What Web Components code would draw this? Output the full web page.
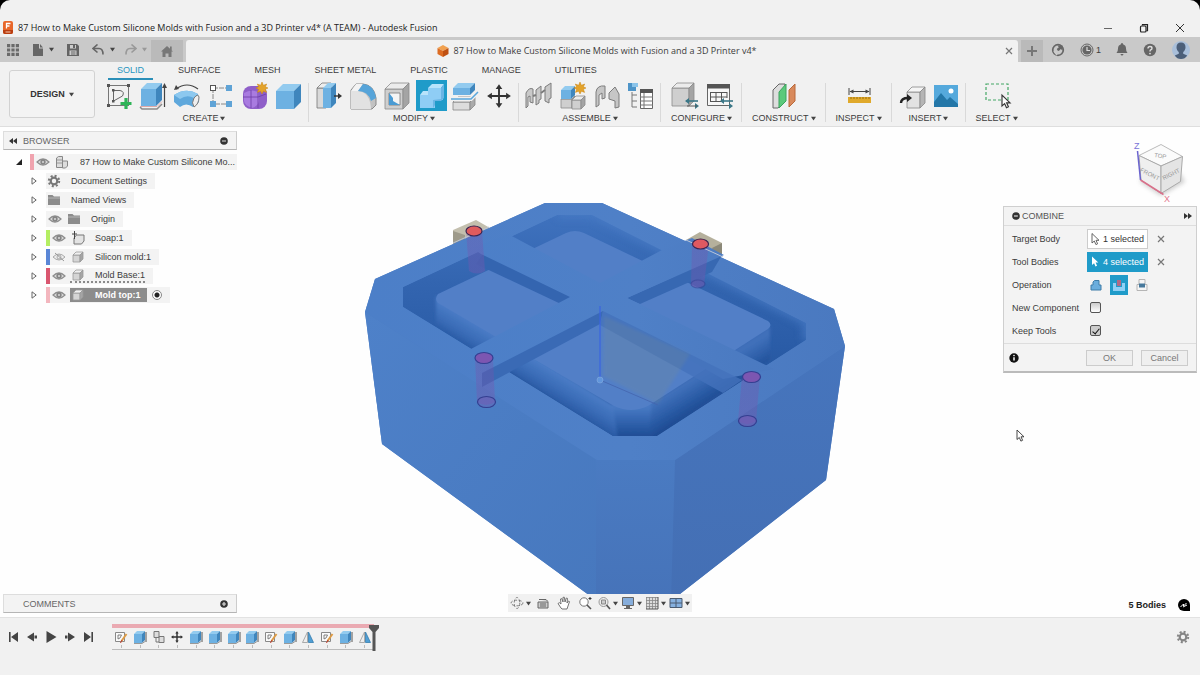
<!DOCTYPE html>
<html lang="en">
<head>
<meta charset="utf-8">
<title>Autodesk Fusion</title>
<style>
html{background:#000}
body{margin:0;font:9px/12px "Liberation Sans",Arial,sans-serif;color:#3c3c3c}
</style>
</head>
<body>
<fusion-app></fusion-app>
<script>
const define = (name, css, html) => customElements.define(name, class extends HTMLElement {
  constructor() {
    super();
    const t = document.createElement('template');
    t.innerHTML = `<style>*{box-sizing:border-box}button{font:inherit;color:inherit;background:none;border:0;padding:0;margin:0}a{color:inherit;text-decoration:none}${css}</style>` + (typeof html === 'function' ? html(this) : html);
    this.attachShadow({mode: 'open'}).append(t.content.cloneNode(true));
  }
});

/* ---------- icon drawings ---------- */
const box = (x, y, w, h, d, f, t, s, stroke = 'none') =>
  `<g stroke="${stroke}" stroke-width=".8" stroke-linejoin="round"><path fill="${f}" d="M${x} ${y + d}h${w}v${h}h-${w}z"/><path fill="${t}" d="M${x} ${y + d}l${d}-${d}h${w}l-${d} ${d}z"/><path fill="${s}" d="M${x + w} ${y + d}l${d}-${d}v${h}l-${d} ${d}z"/></g>`;
const blueBox = (x, y, w, h, d) => box(x, y, w, h, d, '#6db1e2', '#93cbef', '#3f86bd');
const greyBox = (x, y, w, h, d) => box(x, y, w, h, d, '#cfcfcf', '#ececec', '#a4a4a4', '#8a8a8a');
const spark = (x, y) => `<path fill="#e3a32b" stroke="#c98512" stroke-width=".5" transform="translate(${x} ${y})" d="M0-6l1.400 3.300L4.700-4 3.400-1.200 6 0 3.400 1.300 4.600 4.400 1.400 3.200 0 6-1.400 3.200-4.600 4.400-3.400 1.300-6 0-3.400-1.200-4.700-4-1.400-2.700z"/>`;
const gear = (c) => `<g fill="none" stroke="${c}"><circle cx="7" cy="7" r="3.300" stroke-width="2.200"/><circle cx="7" cy="7" r="5.200" stroke-width="2" stroke-dasharray="2.040 2.040"/></g>`;
const arrow = 'M0 0v9.500l2.300-2 1.600 3.600 1.700-.8-1.600-3.500h3z';
const move = (c, s, w) => `<g transform="translate(${c} ${c}) scale(${s})" fill="#333" stroke="#333"><path stroke-width="${w}" d="M-9 0h18M0-9v18"/><path stroke="none" d="M-12.500 0l5-3.500v7zM12.500 0l-5-3.500v7zM0-12.500l3.500 5h-7zM0 12.500l3.500-5h-7z"/></g>`;

const ICONS = {
  logo: [12, 14, '<rect x="1" y="0" width="10" height="13" rx="2" fill="#e8662a"/><path fill="#b93d10" d="M1 9h10v2q0 2-2 2H3q-2 0-2-2z"/><path d="M4.500 7.500v-5h4M4.500 5h3" fill="none" stroke="#fff" stroke-width="1.300"/><path d="M3.500 11h5" stroke="#f7c9b0"/>'],
  min: [10, 10, '<path d="M1 5.500h8" stroke="#666" stroke-width="1"/>'],
  restore: [10, 10, '<rect x="1.500" y="3" width="5.500" height="6" rx="1" fill="none" stroke="#222" stroke-width="1.200"/><path d="M3.500 2.500V1.600h5v6h-1" fill="none" stroke="#222" stroke-width="1.200"/>'],
  close: [10, 10, '<path d="M1 1l8 8M9 1l-8 8" stroke="#333" stroke-width="1"/>'],
  x: [10, 10, '<path d="M2 2l6 6M8 2l-6 6" stroke="#777" stroke-width="1.200"/>'],
  caret: [5, 5, '<path d="M0 .8h5L2.500 4.500z" fill="#444"/>'],
  caretoff: [5, 5, '<path d="M0 .8h5L2.500 4.500z" fill="#999"/>'],
  apps: [12, 12, '<path fill="#6a6a6a" d="M0 0h3.200v3.200H0zM4.400 0h3.200v3.200H4.400zM8.800 0H12v3.200H8.800zM0 4.400h3.200v3.200H0zM4.400 4.400h3.200v3.200H4.400zM8.800 4.400H12v3.200H8.800zM0 8.800h3.200V12H0zM4.400 8.800h3.200V12H4.400zM8.800 8.800H12V12H8.800z"/>'],
  file: [12, 14, '<path fill="#666" d="M1 1h6v4.500h4V13H1z"/><path fill="#666" d="M8 1l3 3.500H8z"/>'],
  save: [12, 12, '<path fill="#646464" d="M0 0h10l2 2v10H0z"/><path fill="#ccc" d="M3 1h6v3.500H3zM2.500 6.500h7V11h-7z"/><path fill="#646464" d="M6 1h2v3H6zM4 7.500h4.500v1H4zM4 9.500h4.500v1H4z"/>'],
  undo: [13, 12, '<path d="M2 4.500h5q4 0 4 6" fill="none" stroke="#666" stroke-width="1.600"/><path d="M5.500.5L1 4.500l4.500 4" fill="none" stroke="#666" stroke-width="1.600"/>'],
  redo: [13, 12, '<path d="M11 4.500H6q-4 0-4 6M7.500.5l4.500 4-4.500 4" fill="none" stroke="#999" stroke-width="1.600"/>'],
  home: [14, 13, '<path fill="#777" d="M7 1l6 5.500h-1.500V12H8.500V8.500h-3V12H2.500V6.500H1z"/><path fill="#777" d="M10 1.500h1.700V5H10z"/>'],
  doc: [12, 12, '<path fill="#f1a14f" d="M6 0l5.500 3L6 6 .5 3z"/><path fill="#dd6c22" d="M.5 3L6 6v6L.5 9z"/><path fill="#bf5012" d="M11.500 3L6 6v6l5.500-3z"/>'],
  plus: [12, 12, '<path d="M6 1v10M1 6h10" stroke="#777" stroke-width="2"/>'],
  ext: [14, 14, '<circle cx="7" cy="7" r="5.300" fill="none" stroke="#666" stroke-width="1.700"/><path fill="#666" d="M6.500 2.500h5v5l-1.700-1.400-2 2q-1.500-.2-2-2l2-1.800z"/><path d="M3 8l3 4" stroke="#ccc" stroke-width="1.500"/>'],
  clock: [14, 14, '<circle cx="7" cy="7" r="6" fill="none" stroke="#666" stroke-width="1"/><circle cx="7" cy="7" r="4.600" fill="#666"/><path d="M7 4v3.500h3" fill="none" stroke="#ddd" stroke-width="1.200"/>'],
  bell: [12, 13, '<path fill="#666" d="M6 0q1 0 1 1.200 3 1 3 4.300 0 3 1.500 4.500H.5Q2 8.500 2 5.500q0-3.300 3-4.300Q5 0 6 0zM4.500 11h3q-.3 1.500-1.500 1.500T4.500 11z"/>'],
  help: [14, 14, '<circle cx="7" cy="7" r="6.200" fill="#666"/><path d="M5 5.500q0-2 2-2t2 1.700q0 1.200-1.300 1.700Q7 7.300 7 8.500" fill="none" stroke="#ddd" stroke-width="1.400"/><circle cx="7" cy="10.600" r=".9" fill="#ddd"/>'],
  avatar: [18, 18, '<circle cx="9" cy="9" r="9" fill="#a9bfda"/><path fill="#4c5f79" d="M9 1.500c3 0 4.500 2 4.500 4.700 0 2-1 4-2.300 4.900v1.700l4 1.700Q13 18 9 18t-6.200-3.500l4-1.700v-1.700C5.500 10.200 4.500 8.200 4.500 6.200 4.500 3.500 6 1.500 9 1.500z"/>'],

  sketch: [30, 30, '<rect x="4.500" y="4.500" width="20" height="20" fill="none" stroke="#777"/><path d="M3 3h3v3H3zM23 3h3v3h-3zM3 23h3v3H3z" fill="#555"/><path d="M9.500 20V9.500H16q5 1 2.500 5.500l-9 5" fill="none" stroke="#666"/><path d="M8 8h2.500v2.500H8zM8 19h2.500v2.500H8z" fill="#555"/><path d="M22 17v11M16.500 22.500h11" stroke="#2eb457" stroke-width="3.200"/>'],
  extrude: [30, 30, '<path d="M2 26l2 2h15l5-5" fill="none" stroke="#8a8a8a" stroke-width="1.500"/><path d="M2 25.500h17l5-5" fill="none" stroke="#dca9a9"/>' + blueBox(3, 2, 15, 17, 6) + '<path d="M26.500 26V6" stroke="#444" stroke-width="1.200"/><path d="M26.500 2l2.500 5h-5z" fill="#444"/>'],
  revolve: [30, 30, '<path fill="#5fa8dc" d="M2 14q12-8 24-1l1 8-6 5q-7-5-13 0l-6-5z"/><path fill="#8cc8ef" d="M2 14q12-8 24-1l-4 4q-7-4-14 1z"/><path d="M22 17q4-5 5-1 0 7-5 10-3-4 0-9z" fill="#eee" stroke="#777"/><path d="M4 8q11-8 22 0" fill="none" stroke="#444" stroke-width="1.200"/><path d="M2 9l2-5 3 4z" fill="#444"/>'],
  pattern: [30, 30, '<path d="M7 7h16M7 7v16h16" fill="none" stroke="#888" stroke-dasharray="5 1"/><rect x="4.500" y="4.500" width="5" height="5" fill="#fff" stroke="#555"/><path fill="#5fa3d6" d="M20 4h6v6h-6zM20 20h6v6h-6zM4 20h6v6H4z"/>'],
  form: [30, 30, '<rect x="3" y="5" width="24" height="23" rx="8" fill="#8f5fc9"/><path d="M4 12q8-5 15 0v8q-1 5-7 7-7-2-8-7z" fill="#a97be0"/><path d="M3 16h15l8-3M11 9v18M18 11v16" stroke="#6c3ea6" fill="none" stroke-width=".8"/>' + spark(22, 7)],
  prim: [30, 30, blueBox(2, 3, 18, 18, 7)],
  press: [30, 30, box(3, 2, 9, 20, 5, '#d9d9d9', '#eee', '#bbb', '#777') + blueBox(9, 2, 8, 20, 5) + '<path d="M20 15h5" stroke="#333" stroke-width="1.400"/><path d="M28 15l-4-3v6z" fill="#333"/>'],
  fillet: [30, 30, '<path d="M3 9l5-6h7q11 1 13 14v7l-4 4H3z" fill="#c2c2c2" stroke="#888"/><path d="M3 10h7q12 1 13 18H3z" fill="#e2e2e2"/><path d="M3 10l5-7h7l-5 7z" fill="#f3f3f3"/><path d="M15 3q11 1 13 14l-5 3Q20 10 10 10z" fill="#56a4d9"/>'],
  shell: [30, 30, greyBox(3, 2, 18, 20, 6) + '<path d="M7 12h11v12H7z" fill="#f4f4f4" stroke="#777" stroke-width=".8"/><path d="M7 24V12l4 5v3l7 4z" fill="#4a9bd3"/>'],
  combine: [31, 31, '<path fill="#8fcdf5" d="M4 28V15h8V8h15v12h-8v8z"/><path fill="#b9e3fb" d="M4 15l3-4h5v4zM12 8l4-4h12l-3 4z"/><path fill="#6ab5e5" d="M25 8l3-4v14l-3 3h-6v4l-2 3V20l8-1z"/>'],
  split: [30, 30, box(3, 16, 17, 8, 5, '#ddd', '#f2f2f2', '#aaa', '#888') + blueBox(3, 2, 17, 7, 5) + '<path d="M1 18h20l7-7" fill="none" stroke="#f1f1f1" stroke-width="4"/><path d="M1 18h20l7-7" fill="none" stroke="#5aa7dc" stroke-width="1.500"/>'],
  move: [30, 30, move(15, .95, 2)],
  joint1: [30, 30, '<g fill="#c9c9c9" stroke="#7c7c7c"><path d="M2 27V12q3-6 7-4v14l-3-1v-6l-2 1v9z"/><path d="M12 24V9l5-4v13l-2 1v3zM21 20V6l6-4v15l-2 1v4z"/><path d="M9 15l3-1M17 12l4-3" stroke-width="2"/></g>'],
  newcomp: [30, 30, greyBox(3, 15, 11, 9, 3) + greyBox(14, 15, 9, 9, 4) + blueBox(3, 5, 10, 9, 4) + spark(22, 7)],
  joint2: [30, 30, '<g fill="#c6c6c6" stroke="#7c7c7c"><path d="M4 26V11q1-7 9-6v12l-3 1v-6l-3 2v10z"/><path d="M17 12l6-6 4 7v13l-4 1v-7l-6-2z"/></g>'],
  bom: [30, 30, '<path fill="#4d94c8" d="M2 2h8v8H2z"/><path fill="#8bc4ea" d="M6 2h6v4H6z"/><path d="M6 11v15M6 14h5M6 20h5M6 26h5" stroke="#777" fill="none"/><path fill="#fff" stroke="#666" d="M14.500 8.500h12v19h-12z"/><path fill="#555" d="M14 8h13v4H14z"/><path d="M14 16h13M14 20h13M14 24h13M18 12v15" stroke="#777"/>'],
  conf1: [30, 30, greyBox(2, 2, 17, 18, 5) + '<path d="M16 20h12" stroke="#3b7787" stroke-width="1.600"/><path d="M19 17v6l-4-3zM25 22v6l4-3z" fill="#3b7787"/><path d="M17 25h10" stroke="#555"/>'],
  conf2: [30, 30, '<path fill="#f7f7f7" stroke="#666" d="M3.500 3.500h22v21h-22z"/><path fill="#555" d="M3 3h23v4.500H3z"/><path d="M6 11.500h17M6 16h17M6 20.500h12M6.500 11v10M12 11v10M17.500 11v10M23 11v6" stroke="#555" fill="none"/><path d="M18 20h11" stroke="#3b7787" stroke-width="1.600"/><path d="M20 17v6l-4-3zM25 22v6l4-3z" fill="#3b7787"/>'],
  plane: [30, 30, '<path fill="#ddd" stroke="#666" d="M4 27V9l6-6h6v18l-7 6z"/><path fill="#5cc97b" stroke="#3ba35c" d="M10 27V11l7-8v17z"/><path fill="#d98a5c" stroke="#b9693b" d="M20 26V9l6-6v17z"/>'],
  measure: [30, 30, '<path d="M5 7v7M26 7v7M6 10.500h19" stroke="#444"/><path d="M5.500 10.500l4-2v4zM25.500 10.500l-4-2v4z" fill="#444"/><path fill="#e0a92b" d="M4 16h23v6H4z"/><path d="M7 16v2M10 16v2M13 16v2M16 16v2M19 16v2M22 16v2M25 16v2" stroke="#9a6f0d"/>'],
  insert: [30, 30, box(10, 6, 13, 16, 5, '#e2e2e2', '#f5f5f5', '#b5b5b5', '#888') + '<path d="M4 22q0-5 7-5" fill="none" stroke="#222" stroke-width="2.400"/><path d="M10 13l5 4-5 4z" fill="#222"/>'],
  image: [30, 30, '<path fill="#55a9dc" d="M3 4h24v22H3z"/><path fill="#2477a8" d="M3 21l7-9 6 7 3-3 8 7v3H3z"/><circle cx="20" cy="10" r="2.500" fill="#fff"/>'],
  select: [30, 30, '<path d="M4 3h22v16H4z" fill="none" stroke="#45a766" stroke-width="1.200" stroke-dasharray="3 2"/><path transform="translate(20 14) scale(1.150)" d="' + arrow + '" fill="#fff" stroke="#333"/>'],

  rew: [10, 8, '<path fill="#333" d="M5 1v6L1 4zM9 1v6L5 4z"/>'],
  fwd: [10, 8, '<path fill="#333" d="M1 1v6l4-3zM5 1v6l4-3z"/>'],
  minus: [8, 8, '<circle cx="4" cy="4" r="3.800" fill="#333"/><path d="M2 4h4" stroke="#ddd" stroke-width="1.200"/>'],
  add: [8, 8, '<circle cx="4" cy="4" r="3.800" fill="#333"/><path d="M2 4h4M4 2v4" stroke="#ddd" stroke-width="1.200"/>'],
  info: [10, 10, '<circle cx="5" cy="5" r="4.700" fill="#111"/><path d="M5 4.200v3.300" stroke="#fff" stroke-width="1.500"/><circle cx="5" cy="2.600" r=".8" fill="#fff"/>'],
  open: [8, 8, '<path fill="#222" d="M7 1v6H1z"/>'],
  shut: [8, 8, '<path fill="#fff" stroke="#666" d="M2 .8L6.200 4 2 7.200z"/>'],
  eye: [14, 12, '<path d="M1 6q6-6 12 0-6 6-12 0z" fill="#dcdcdc" stroke="#8e8e8e" stroke-width="1.200"/><circle cx="7" cy="6" r="2.700" fill="#858585"/><circle cx="7" cy="6" r="1" fill="#d8d8d8"/>'],
  eyeoff: [14, 12, '<path d="M1 6q6-6 12 0-6 6-12 0z" fill="#eee" stroke="#a8a8a8"/><circle cx="7" cy="6" r="2" fill="none" stroke="#a8a8a8"/><path d="M3 2l9 8" stroke="#999"/>'],
  gear: [14, 14, gear('#777')],
  gear2: [14, 14, gear('#858585')],
  folder: [14, 12, '<path fill="#8c8c8c" d="M1 1h4.500L7 2.500h6V11H1z"/><path d="M1 4h12" stroke="#b5b5b5"/>'],
  assembly: [14, 14, '<path fill="#ddd" stroke="#888" d="M1.500 3l2-1.500h4v11h-6zM7.500 6h5v5l-2 2h-3z"/><path d="M2 5h5M2 8h5" stroke="#999"/>'],
  soap: [14, 14, '<path fill="#e3e3e3" stroke="#777" d="M3 7l2.500-3H13v6l-2.500 3H3z"/><path d="M3.500 0v8M1 3h5" stroke="#444"/>'],
  body: [12, 12, box(1, 1, 7, 7, 3, '#d5d5d5', '#f0f0f0', '#a5a5a5', '#999')],
  cursor: [9, 12, '<path transform="translate(1 .5)" d="' + arrow + '" fill="#fff" stroke="#555" stroke-width=".9"/>'],
  cursorw: [9, 12, '<path transform="translate(1 .5) scale(.9)" d="' + arrow + '" fill="#fff"/>'],
  pointer: [9, 13, '<path transform="translate(1 1)" d="' + arrow + '" fill="#fff" stroke="#333" stroke-width=".9"/>'],
  opjoin: [12, 12, '<path fill="#6aaddd" stroke="#3e7ca8" d="M1 11V6h2V3l1.500-1.500H9V6h2v5z"/>'],
  opcut: [12, 12, '<path fill="#8fd0f5" d="M0 4h3v4h6V4h3v8H0z"/><path fill="#b06a86" d="M4 1h4v6H4z"/>'],
  opint: [12, 12, '<path fill="#f5f5f5" stroke="#b5b5b5" d="M3 .5h6v5h2v6H1v-6h2z"/><path fill="#47799c" d="M3 4.500h6v4H3z"/>'],

  orbit: [14, 14, '<g fill="none" stroke="#777" stroke-width=".9"><ellipse cx="7" cy="7" rx="6" ry="2.800" stroke-dasharray="3 1.500"/><ellipse cx="7" cy="7" rx="2.800" ry="5.500" stroke-dasharray="3 1.500"/></g>'],
  look: [14, 14, '<path fill="#ccc" stroke="#666" d="M2 6h10v6H2zM3 3.500h7l2 2"/><path d="M4 8h6M4 10h6" stroke="#666"/>'],
  pan: [14, 14, '<path fill="#fff" stroke="#666" stroke-width=".9" stroke-linejoin="round" d="M4 12L1 7.500l1.500-.8L4 8 3.500 3l1.300-.4L6 6V1.300h1.400L8 6l1.300-4 1.200.4L10 7l1.500-2 1 .6L11 10l-1 3H5z"/>'],
  zoom: [14, 14, '<circle cx="6" cy="6" r="4.200" fill="#fff" stroke="#777"/><path d="M9 9l4 4" stroke="#555" stroke-width="1.600"/><path d="M12 1v3M10.500 2.500h3" stroke="#333"/>'],
  fit: [14, 14, '<circle cx="6.500" cy="6" r="4.500" fill="#eee" stroke="#999"/><path d="M4.500 4h4v4h-4z" fill="#ccc" stroke="#888"/><path d="M9.500 9l3.500 4" stroke="#555" stroke-width="1.600"/>'],
  display: [14, 14, '<path fill="#86addb" stroke="#666" d="M1.500 1.500h11v8h-11z"/><path fill="#666" d="M5 10h4v2h2v1H3v-1h2z"/>'],
  grid: [14, 14, '<path fill="#ddd" d="M1 1h12v12H1z"/><path d="M1 1.500h12M1 4.500h12M1 7.500h12M1 10.500h12M1.500 1v12M4.500 1v12M7.500 1v12M10.500 1v12" stroke="#888" stroke-width=".8"/><path d="M1 13h12V1" stroke="#555" fill="none"/>'],
  views: [14, 12, '<path fill="#86b1e0" stroke="#4a5b70" d="M1 1.500h12v9H1zM7 1.500v9M1 6h12"/>'],

  first: [12, 12, '<path fill="#444" d="M2 1h1.600v10H2zM11 1v10L4 6z"/>'],
  prev: [12, 12, '<path fill="#444" d="M8 1.500v9L1 6zM8.500 4.500h2.500v3H8.500z"/>'],
  play: [12, 14, '<path fill="#444" d="M1.500 1l10 6-10 6z"/>'],
  next: [12, 12, '<path fill="#444" d="M4 1.500v9L11 6zM1 4.500h2.500v3H1z"/>'],
  last: [12, 12, '<path fill="#444" d="M8.400 1H10v10H8.400zM1 1v10l7-5z"/>'],
  tsketch: [14, 14, '<path d="M1.500 2.500h9v9h-9z" fill="#fafafa" stroke="#888"/><path d="M4 9V5h3.500L6 8z" fill="none" stroke="#666" stroke-width=".8"/><path d="M12.500 4l-5 7" stroke="#dd9b45" stroke-width="2"/><path d="M8 10l-1.500 3" stroke="#c0392b"/>'],
  textrude: [14, 14, blueBox(1, 1, 8, 9, 3) + '<path d="M13 12V2" stroke="#555"/><path d="M1 13.500h8l3-2" stroke="#999" fill="none"/>'],
  tjoint: [14, 14, '<path fill="#ddd" stroke="#777" d="M2 1.500h5v6H2zM7 6.500h5v6H7z"/><path d="M4 8v4h3" fill="none" stroke="#777"/>'],
  tmove: [14, 14, move(7, .48, 3)],
  tmirror: [14, 14, '<path fill="#eee" stroke="#999" stroke-width=".8" d="M6.500 2v10.500h-5z"/><path fill="#4f9ed4" stroke="#377daf" stroke-width=".8" d="M7.500 2l5 10.500h-5z"/>'],
  marker: [10, 26, '<path fill="#555" d="M0 0h10v3L6.500 7v19h-3V7L0 3z"/>'],
  chat: [12, 12, '<path fill="#000" d="M6 0a6 6 0 0 1 6 6v6H6A6 6 0 0 1 6 0z"/><path d="M2.500 8l3-3v2l3-3M5 8l4-2" stroke="#fff" fill="none"/>']
};
define('ui-icon', ':host{display:block;flex:none}svg{display:block}', el => {
  const [w, h, body] = ICONS[el.getAttribute('name')];
  return `<svg aria-hidden="true" width="${w}" height="${h}" viewBox="0 0 ${w} ${h}">${body}</svg>`;
});
const ic = n => `<ui-icon name="${n}"></ui-icon>`;

/* ---------- title bar ---------- */
define('title-bar', `
:host{display:flex;align-items:center;height:37px;padding:18px 2px 0;font:9px/18px "Open Sans","Noto Sans",sans-serif;color:#222}
span{margin-left:4px;flex:1}
button{width:36px;height:18px;display:grid;place-items:center}`,
`${ic('logo')}<span><slot></slot></span>
<button aria-label="Minimize">${ic('min')}</button><button aria-label="Restore">${ic('restore')}</button><button aria-label="Close">${ic('close')}</button>`);

/* ---------- quick access bar and document tab ---------- */
define('quick-bar', `
:host{display:flex;height:25px;background:#c9c9c9}
button{display:flex;align-items:center;justify-content:center;gap:5px;width:26px;height:25px;flex:none}
.w{width:34px}
.r{width:30px}
.tile{align-self:flex-end;height:22px;background:#bababa}
.home{width:32px;margin-left:1px}
.tab{flex:1;min-width:0;display:flex;align-items:center;margin:3px 3px 0;height:22px;background:#f1f1f1;border-radius:3px 3px 0 0;padding-left:8px;font-family:"Open Sans","Noto Sans",sans-serif}
.tab a{display:flex;align-items:center;gap:4px;margin:auto}
.tab button{width:18px}
.plus{width:22px}
.right{display:flex;flex:none;align-items:center;justify-content:space-between;width:139px;margin:0 10px 0 8px}
.right button{width:auto;gap:2px}`,
`<button aria-label="Data panel">${ic('apps')}</button><button class="w" aria-label="File">${ic('file')}${ic('caret')}</button><button aria-label="Save">${ic('save')}</button><button class="w" aria-label="Undo">${ic('undo')}${ic('caret')}</button><button class="r" aria-label="Redo">${ic('redo')}${ic('caretoff')}</button><button class="tile home" aria-label="Home">${ic('home')}</button>
<div class="tab"><a href="#document">${ic('doc')}<slot></slot></a><button aria-label="Close tab">${ic('x')}</button></div>
<button class="tile plus" aria-label="New tab">${ic('plus')}</button>
<div class="right"><button aria-label="Extensions">${ic('ext')}</button><button aria-label="Jobs">${ic('clock')}<span>1</span></button><button aria-label="Notifications">${ic('bell')}</button><button aria-label="Help">${ic('help')}</button><button aria-label="Account">${ic('avatar')}</button></div>`);

/* ---------- ribbon ---------- */
define('ribbon-group', `
:host{display:flex;flex-direction:column;align-items:center;padding:0 3px;position:relative}
:host(:not([last]))::after{content:"";position:absolute;right:0;top:3px;bottom:3px;width:1px;background:#d9d9d9}
.tools{display:flex}
.tools button{width:34px;height:31px;display:grid;place-items:center}
.tools .on{background:linear-gradient(#1f9bc9,#1f9bc9) center/31px 31px no-repeat}
.name{display:flex;align-items:center;gap:2px;padding:0 7px;height:14px;line-height:14px}`,
el => `<div class="tools">${el.getAttribute('tools').split(' ').map(t => `<button aria-label="${t}"${t === 'combine' ? ' class="on"' : ''}>${ic(t)}</button>`).join('')}</div><button class="name"><slot></slot>${ic('caret')}</button>`);
define('ribbon-bar', `
:host{display:flex;height:65px;border-bottom:1px solid #dedede;background:#f1f1f1}
.space{width:86px;height:48px;margin:8px 4px 0 9px;border:1px solid #d2d2d2;border-radius:3px;background:#f3f3f3;font-weight:bold;display:flex;align-items:center;justify-content:center;gap:4px;flex:none;color:#333}
nav{display:flex;gap:34px;padding-left:9px;height:18px}
nav a{line-height:17px;height:18px;white-space:nowrap}
nav a.on{color:#2795c0;border-bottom:2px solid #2b8fb8;padding:0 9px;margin-right:-9px}
.groups{display:flex}`,
`<button class="space">DESIGN ${ic('caret')}</button>
<div><nav><a class="on" href="#solid">SOLID</a><a href="#surface">SURFACE</a><a href="#mesh">MESH</a><a href="#sheet">SHEET METAL</a><a href="#plastic">PLASTIC</a><a href="#manage">MANAGE</a><a href="#utilities">UTILITIES</a></nav>
<div class="groups">
<ribbon-group tools="sketch extrude revolve pattern form prim">CREATE</ribbon-group>
<ribbon-group tools="press fillet shell combine split move">MODIFY</ribbon-group>
<ribbon-group tools="joint1 newcomp joint2 bom">ASSEMBLE</ribbon-group>
<ribbon-group tools="conf1 conf2">CONFIGURE</ribbon-group>
<ribbon-group tools="plane">CONSTRUCT</ribbon-group>
<ribbon-group tools="measure">INSPECT</ribbon-group>
<ribbon-group tools="insert image">INSERT</ribbon-group>
<ribbon-group last tools="select">SELECT</ribbon-group>
</div></div>`);

/* ---------- browser tree ---------- */
define('panel-bar', `
:host{display:flex;align-items:center;height:19px;width:234px;padding:0 8px 0 4px;background:#f3f3f3;border:1px solid #ddd;border-bottom-color:#b5b5b5;border-right-color:#ccc;color:#666}
b{font-weight:normal;flex:1;margin-left:5px}
i{width:10px}`,
el => `${el.hasAttribute('open') ? ic('rew') : '<i></i>'}<b><slot></slot></b>${ic(el.hasAttribute('open') ? 'minus' : 'add')}`);
define('tree-row', `
:host{display:flex;align-items:center;height:19px;padding-left:25px}
:host([root]){padding-left:11px}
.arrow{width:12px;display:grid;place-items:center}
.chip{display:flex;align-items:center;height:16px;background:#f3f3f3;padding-right:8px;margin-left:6px}
:host([root]) .chip{margin-left:5px;padding-right:2px}
.bar{width:4px;height:16px}
.eye{width:18px;display:grid;place-items:center}
.icon{width:16px;display:grid;place-items:center}
.name{margin-left:9px;white-space:nowrap}
:host([root]) .name{margin-left:10px}
.deep{display:flex;align-items:center;height:14px}
.eye + .deep{margin-left:2px}
.dots{border-bottom:2px dotted #8a8a8a}
.sel{background:#8c8c8c;color:#fff;font-weight:bold;padding-right:6px}
input{margin:0 0 0 5px;width:10px;height:10px;appearance:none;border:1px solid #888;border-radius:50%;background:radial-gradient(#222 0 2px,#fff 3px)}`,
el => {
  const a = n => el.getAttribute(n), sel = el.hasAttribute('sel');
  return `<span class="arrow">${ic(el.hasAttribute('root') ? 'open' : 'shut')}</span><span class="chip">${a('bar') ? `<span class="bar" style="background:${a('bar')}"></span>` : ''}${a('eye') ? `<span class="eye">${ic(a('eye'))}</span>` : ''}<span class="deep ${sel ? 'sel' : ''} ${el.hasAttribute('dots') ? 'dots' : ''}"><span class="icon">${ic(a('icon'))}</span><span class="name"><slot></slot></span></span>${sel ? '<input type="radio" checked aria-label="Active component">' : ''}</span>`;
});
define('browser-panel', ':host{display:block}.tree{padding-top:2px;width:234px}', `
<panel-bar open>BROWSER</panel-bar>
<div class="tree">
<tree-row root bar="#f0a3ae" eye="eye" icon="assembly">87 How to Make Custom Silicone Mo...</tree-row>
<tree-row icon="gear">Document Settings</tree-row>
<tree-row icon="folder">Named Views</tree-row>
<tree-row eye="eye" icon="folder">Origin</tree-row>
<tree-row bar="#b4ee62" eye="eye" icon="soap">Soap:1</tree-row>
<tree-row bar="#5a86d6" eye="eyeoff" icon="body">Silicon mold:1</tree-row>
<tree-row bar="#d9566f" eye="eye" icon="body" dots>Mold Base:1</tree-row>
<tree-row bar="#f3b6be" eye="eye" icon="body" sel>Mold top:1</tree-row>
</div>`);

/* ---------- combine dialog ---------- */
define('combine-panel', `
:host{display:block;width:194px;background:#f3f3f3;border:1px solid #cfcfcf;border-bottom:2px solid #bbb}
header{display:flex;align-items:center;height:19px;padding:0 3px 0 8px;border-bottom:1px solid #ddd;color:#555}
header b{font-weight:normal;flex:1;margin-left:2px}
.rows{display:grid;grid-template-columns:75px 1fr;grid-auto-rows:21px;row-gap:2px;padding:2px 8px 2px;align-items:center;border-bottom:1px solid #ddd}
.f{display:flex;align-items:center}
.pick{width:61px;height:20px;display:flex;align-items:center;justify-content:center;gap:3px;background:#fff;border:1px solid #ccc;color:#333}
.pick.on{background:#1f9bc9;border-color:#1f9bc9;color:#fff}
.x{margin-left:8px}
.op{width:18px;height:20px;display:grid;place-items:center;margin-right:5px}
.op.on{background:#1f9bc9}
input{appearance:none;width:11px;height:11px;margin:0 0 0 3px;border:1px solid #555;border-radius:2px;background:linear-gradient(#ccc,#fff);display:grid;place-items:center}
input:checked{background:#ccc}
input:checked::after{content:"";width:3px;height:6px;border:solid #111;border-width:0 1px 1px 0;transform:rotate(40deg)}
footer{display:flex;align-items:center;height:27px;padding:0 8px 0 5px;gap:8px}
footer ui-icon{margin-right:auto}
footer button{width:47px;height:16px;border:1px solid #ccc;background:#efefef;color:#777}`,
`<header>${ic('minus')}<b>COMBINE</b>${ic('fwd')}</header>
<div class="rows">
<label for="target">Target Body</label><div class="f"><button id="target" class="pick">${ic('cursor')}<span>1 selected</span></button><button class="x" aria-label="Clear target">${ic('x')}</button></div>
<label for="tools">Tool Bodies</label><div class="f"><button id="tools" class="pick on">${ic('cursorw')}<span>4 selected</span></button><button class="x" aria-label="Clear tools">${ic('x')}</button></div>
<label for="join">Operation</label><div class="f"><button id="join" class="op" aria-label="Join">${ic('opjoin')}</button><button class="op on" aria-label="Cut">${ic('opcut')}</button><button class="op" aria-label="Intersect">${ic('opint')}</button></div>
<label for="newc">New Component</label><div class="f"><input id="newc" type="checkbox"></div>
<label for="keep">Keep Tools</label><div class="f"><input id="keep" type="checkbox" checked></div>
</div>
<footer>${ic('info')}<button>OK</button><button>Cancel</button></footer>`);

/* ---------- view cube ---------- */
define('view-cube', ':host{display:block}svg{display:block;font:6px "Liberation Sans",sans-serif}', `
<svg width="60" height="66" viewBox="1130 138 60 66">
<defs><filter id="s" x="-30%" y="-30%" width="160%" height="160%"><feGaussianBlur stdDeviation="2"/></filter></defs>
<path d="M1140 182l21 14 24-14-4-8h-38z" fill="#999" opacity=".45" filter="url(#s)"/>
<path d="M1161 144.500l21.500 12L1161 166l-22-10.500z" fill="#fbfbfb" stroke="#bbb"/>
<path d="M1139 155.500l22 10.500v27.500l-20-13.500z" fill="#efefef" stroke="#aaa"/>
<path d="M1182.500 156.500L1161 166v27.500l19.500-12z" fill="#e4e4e4" stroke="#aaa"/>
<path d="M1137.500 151l3 29" stroke="#6a63cf" stroke-width="1.500"/><path d="M1140.500 180l23 14.500" stroke="#d9708a" stroke-width="1.500"/>
<g fill="#999" text-anchor="middle" font-size="6"><text transform="translate(1160 158) rotate(10)">TOP</text><text transform="translate(1149 176) rotate(27)">FRONT</text><text transform="translate(1172 176) rotate(-27)">RIGHT</text></g>
<text x="1134" y="149" font-size="9" fill="#7a74d8">Z</text><text x="1164" y="202" font-size="9" fill="#e2778d">X</text>
</svg>`);

/* ---------- modelled part ---------- */
define('model-view', ':host{display:block}svg{display:block;width:100%;height:100%}', `
<svg viewBox="0 127 1200 490" role="img" aria-label="Blue mold with four alignment pins">
<defs>
<linearGradient id="left" x1="0" y1="0" x2="1" y2="1"><stop offset="0" stop-color="#4e81c9"/><stop offset="1" stop-color="#4778be"/></linearGradient>
<linearGradient id="right" x1="0" y1="0" x2="0" y2="1"><stop offset="0" stop-color="#4675bd"/><stop offset="1" stop-color="#446fb4"/></linearGradient>
<linearGradient id="mid" x1="0" y1="0" x2="0" y2="1"><stop offset="0" stop-color="#4a7bc2"/><stop offset="1" stop-color="#4673b9"/></linearGradient>
<linearGradient id="top" x1="0" y1="0" x2="1" y2="0"><stop offset="0" stop-color="#4c7fc8"/><stop offset=".55" stop-color="#4f80c7"/><stop offset="1" stop-color="#4a79c0"/></linearGradient>
<linearGradient id="pit" gradientUnits="userSpaceOnUse" x1="0" y1="215" x2="0" y2="436"><stop offset="0" stop-color="#3f72be"/><stop offset=".3" stop-color="#3365b0"/><stop offset=".6" stop-color="#2a5ca7"/><stop offset="1" stop-color="#1e4b91"/></linearGradient>
<linearGradient id="wl" gradientUnits="userSpaceOnUse" x1="436" y1="300" x2="421" y2="325"><stop offset="0" stop-color="#4a7cc6"/><stop offset=".5" stop-color="#396bb6"/><stop offset="1" stop-color="#24549e"/></linearGradient>
<linearGradient id="wr" gradientUnits="userSpaceOnUse" x1="645" y1="410" x2="659" y2="433"><stop offset="0" stop-color="#3f70ba"/><stop offset=".6" stop-color="#295aa4"/><stop offset="1" stop-color="#1e4b93"/></linearGradient>
<linearGradient id="wm" gradientUnits="userSpaceOnUse" x1="0" y1="408" x2="0" y2="436"><stop offset="0" stop-color="#4678c2"/><stop offset=".5" stop-color="#3062ad"/><stop offset="1" stop-color="#1f4d95"/></linearGradient>
<linearGradient id="pin" x1="0" y1="0" x2="0" y2="1"><stop offset="0" stop-color="#7b4da8" stop-opacity=".3"/><stop offset="1" stop-color="#7658b2" stop-opacity=".4"/></linearGradient>
<filter id="blur" x="-20%" y="-20%" width="140%" height="140%"><feGaussianBlur stdDeviation="4"/></filter>
<filter id="soft" x="-20%" y="-20%" width="140%" height="140%"><feGaussianBlur stdDeviation="1.500"/></filter>
<clipPath id="cavity"><path d="M557 215h35l214 108v17l-149 96h-44L403 307v-20z"/></clipPath>
</defs>
<path fill="#c3bfae" d="M453 230l23-10 14 8-37 16z"/><path fill="#9e9a8a" d="M453 231l12 4v8l-12 2z"/>
<path fill="#b5b09c" d="M686 240l14-8 22 11v13z"/><path fill="#8b8878" d="M712 248l10-5v13l-8-3z"/>
<path fill="#4b7cc3" d="M375 279l170-76h57l232 106 11 37-19 134-155 121h-74L382 444 365 312z"/>
<path fill="url(#left)" d="M365 312l232 148v141L382 444z"/>
<path fill="url(#mid)" d="M596 459h80l-4 142h-76z"/>
<path fill="url(#right)" d="M675 460l170-114-19 134-155 121z"/>
<path fill="url(#top)" d="M375 279l170-76h57l232 106 11 37-170 114h-78L365 312z"/>
<g clip-path="url(#cavity)">
<path fill="url(#pit)" d="M557 215h35l214 108v17l-149 96h-44L403 307v-20z"/>
<path fill="none" stroke="#4a7cc5" stroke-width="10" opacity=".8" d="M557 213h35l216 108v20" filter="url(#blur)"/>
<g filter="url(#soft)">
<path fill="url(#wl)" d="M436 296l182 112v34L436 323z"/>
<path fill="url(#wr)" d="M645 406l125-80v34l-125 84z"/>
<path fill="url(#wm)" d="M612 400h40l-4 40h-30z"/>
</g>
<path fill="#527fc7" d="M438 294l128-61q9-4 18 0l184 88q5 4 0 8l-120 77q-17 8-34 0L438 303q-4-4 0-9z"/>
</g>
<path fill="#3465b0" d="M483 254l89 43-11 7-85-40z"/>
<path fill="#3768b2" d="M627 298l95-43-10 17-72 32z"/>
<path fill="url(#top)" d="M472 248l36-14 92 49 62-33 30-12 32 17-97 43 147 71-51 10-121-68-119 64-14-25 101-53-89-43z"/>
<path fill="#4472bb" d="M603 311l139 69-19 13-123-68z" opacity=".8"/>
<path fill="#3a6ab5" d="M603 311l-3 13-118 63v-14z"/>
<path fill="#8d9576" opacity=".16" d="M604 316l86 38-32 50-55-28z" filter="url(#soft)"/>
<path d="M600 306v74" stroke="#3b64df" stroke-width="1.200"/><path d="M600 380l58 25" stroke="#4465ad" stroke-width=".8"/><circle cx="600" cy="380" r="3" fill="#6196dc" stroke="#86acdf" stroke-width=".6"/>
<g fill="url(#pin)">
<path d="M466 231h16l3 40q-8 5-16 0z"/><path d="M692 244h17l-5 41q-7 5-13 0z"/>
<path d="M475 358h18l2 44q-9 6-18 0z"/><path d="M742 377h18l-4 44q-9 6-18 0z"/></g>
<path d="M453 243l36-16M686 240l37 17" stroke="#b8c4d8" stroke-width="1"/>
<g stroke="#3a2450" stroke-width="1.200"><ellipse cx="474" cy="231" rx="8" ry="5" fill="#df5b5d"/><ellipse cx="700.500" cy="244" rx="8" ry="5" fill="#df5961"/></g>
<g fill="#7c56b1" stroke="#343f91" stroke-width="1.200"><ellipse cx="484" cy="358" rx="9" ry="5.500"/><ellipse cx="751.500" cy="377" rx="9" ry="5.500"/><ellipse cx="486.500" cy="402" rx="9" ry="5.500" fill-opacity=".3"/><ellipse cx="747.500" cy="421" rx="9" ry="5.500" fill-opacity=".5"/><ellipse cx="698" cy="284" rx="7" ry="4" fill-opacity=".2" stroke-opacity=".5"/></g>
</svg>`);

/* ---------- navigation strip ---------- */
define('nav-strip', `
:host{display:flex;align-items:center;justify-content:space-between;width:184px;height:18px;padding:0 2px;background:#f1f1f1}
button{display:flex;align-items:center;gap:2px}
.solo{padding:0 2px}`,
[['orbit', 1], ['look'], ['pan'], ['zoom'], ['fit', 1], ['display', 1], ['grid', 1], ['views', 1]].map(([n, c]) => `<button aria-label="${n}"${c ? '' : ' class="solo"'}>${ic(n)}${c ? ic('caret') : ''}</button>`).join(''));

/* ---------- timeline ---------- */
const STEPS = 'tsketch textrude tjoint tmove textrude textrude textrude textrude tsketch textrude tmirror tsketch textrude tmirror'.split(' ');
define('time-line', `
:host{display:flex;align-items:flex-start;height:58px;border-top:1px solid #e2e2e2;background:#f1f1f1;padding:6px 10px 0 3px}
.play{display:flex;margin-top:3px}
.play button{width:19px;height:20px;display:grid;place-items:center}
.track{position:relative;width:262px;margin-left:14px;border-top:4px solid #eaaab2}
.steps{display:grid;grid-template-columns:repeat(14,1fr);border-bottom:1px solid #bbb;height:22px;padding-top:2px}
.steps button{display:grid;justify-items:center;align-content:start}
.steps button::after{content:"";width:1px;height:3px;background:#bbb;margin-top:1px}
.marker{position:absolute;right:-5px;top:-3px}
.gear{margin:6px 0 0 auto}`,
`<div class="play">${['first', 'prev', 'play', 'next', 'last'].map(n => `<button aria-label="${n}">${ic(n)}</button>`).join('')}</div>
<div class="track"><div class="steps">${STEPS.map(n => `<button aria-label="${n.slice(1)}">${ic(n)}</button>`).join('')}</div><span class="marker">${ic('marker')}</span></div>
<button class="gear" aria-label="Timeline settings">${ic('gear2')}</button>`);

/* ---------- page ---------- */
define('work-area', `
:host{display:block;position:relative;flex:1;background:#fefefe;min-height:480px}
.over{position:absolute}
model-view{position:absolute;inset:0}
.browser{left:3px;top:4px}
.comments{left:3px;bottom:4px}
.cube{right:10px;top:11px}
.combine{right:3px;top:79px}
.nav{left:0;right:0;bottom:5px;display:flex;justify-content:center}
.status{right:10px;bottom:6px;display:flex;align-items:center;gap:12px;font-weight:bold;color:#222}
.mouse{right:175px;top:302px}`,
`<model-view></model-view>
<div class="over nav"><nav-strip></nav-strip></div>
<browser-panel class="over browser"></browser-panel>
<panel-bar class="over comments">COMMENTS</panel-bar>
<view-cube class="over cube"></view-cube>
<combine-panel class="over combine"></combine-panel>
<div class="over mouse">${ic('pointer')}</div>
<div class="over status">5 Bodies ${ic('chat')}</div>`);
define('fusion-app', ':host{display:flex;flex-direction:column;min-height:100vh;background:#f1f1f1;border-radius:10px 10px 0 0;overflow:hidden}', `
<title-bar>87 How to Make Custom Silicone Molds with Fusion and a 3D Printer v4* (A TEAM) - Autodesk Fusion</title-bar>
<quick-bar>87 How to Make Custom Silicone Molds with Fusion and a 3D Printer v4*</quick-bar>
<ribbon-bar></ribbon-bar>
<work-area></work-area>
<time-line></time-line>`);
</script>
</body>
</html>
